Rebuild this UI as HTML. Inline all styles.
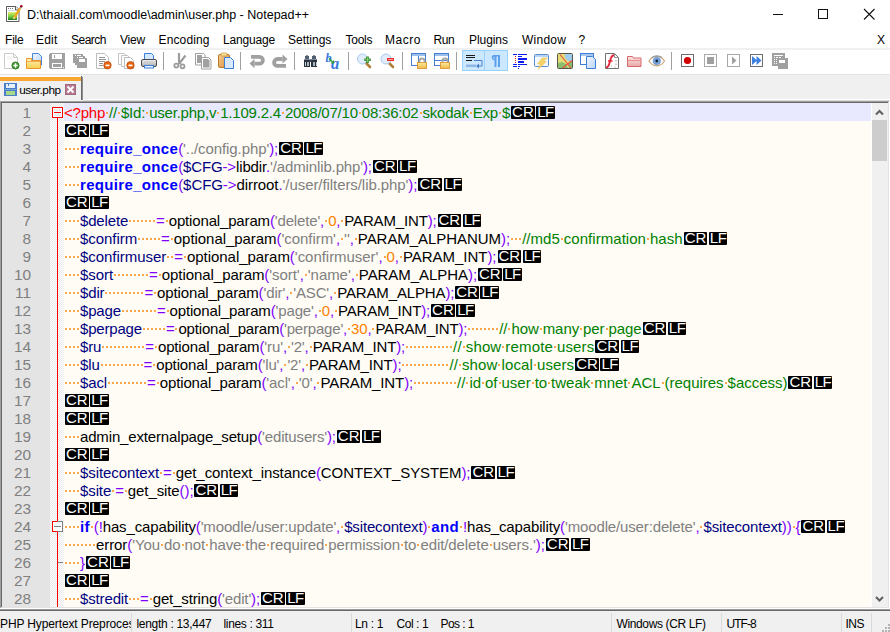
<!DOCTYPE html>
<html><head><meta charset="utf-8"><title>Notepad++</title>
<style>
*{margin:0;padding:0;box-sizing:border-box}
html,body{width:890px;height:632px;overflow:hidden;background:#fff}
body{font-family:"Liberation Sans",sans-serif;position:relative}
#win{position:absolute;left:0;top:0;width:890px;height:632px;background:#fff;overflow:hidden}
.abs{position:absolute}
#title{position:absolute;left:27px;top:7px;font-size:12.5px;color:#000;white-space:pre;line-height:16px}
#menu .mi{position:absolute;top:32px;font-size:12px;line-height:16px;color:#000;white-space:pre}
#editor{position:absolute;left:0;top:0;width:890px;height:632px}
#textbg{position:absolute;left:2px;top:103px;width:869px;height:504px;background:#FEFCF5}
#lnm{position:absolute;left:2px;top:103px;width:48px;height:504px;background:#E4E4E4}
#fold{position:absolute;left:50px;top:103px;width:14px;height:504px;background:repeating-conic-gradient(#FFFFFF 0 25%,#E9E9E9 0 50%) 0 0/2px 2px}
#cur{position:absolute;left:64px;top:103px;width:807px;height:18px;background:#E8E8FF}
.num{position:absolute;left:2px;width:29px;text-align:right;font-size:15.4px;line-height:18px;padding-top:0.6px;color:#808080;white-space:pre}
.ln{position:absolute;left:64px;height:18px;padding-top:1px;font-size:15px;line-height:18px;white-space:pre;color:#000}
.ln .q{color:#FF0000}.ln .c{color:#008000}.ln .k{color:#0000FF;font-weight:bold;letter-spacing:0.33px}.ln .v{color:#000080}
.ln .s{color:#808080}.ln .n{color:#FF8000}.ln .o{color:#8000FF}.ln .d{color:#000}
.sp{font-weight:normal;display:inline-block;width:4px;height:18px;vertical-align:top;overflow:hidden;background:linear-gradient(#FFA64D,#FFA64D) no-repeat 1px 8px/2px 2px}
.eol{font-style:normal;display:inline-block;vertical-align:top;height:18px;margin-left:1px}
.eol u{text-decoration:none;display:inline-block;vertical-align:top;background:#000;color:#fff;font-size:15px;line-height:12px;height:13px;margin-top:2px;padding:0 1px;border-radius:1px;margin-right:1.5px;letter-spacing:0}
#sbar{position:absolute;left:872px;top:103px;width:16px;height:504px;background:#F0F0F0}
#status{position:absolute;left:0;top:611px;width:890px;height:21px;background:#F0F0F0}
#status .st{position:absolute;top:5px;font-size:12px;line-height:16px;white-space:pre;color:#000}
#status .sep{position:absolute;top:2px;width:1px;height:19px;background:#D9D9D9}
#tabtxt{position:absolute;left:19.3px;top:82.5px;font-size:11.8px;line-height:14px;color:#000;letter-spacing:-0.5px;white-space:pre}
#svg{position:absolute;left:0;top:0}
.eol u+u{letter-spacing:-0.5px}

</style></head>
<body>
<div id="win">
<div class="abs" style="left:0;top:48px;width:890px;height:2px;background:#F0F0F0"></div>
<div class="abs" style="left:0;top:74px;width:890px;height:1px;background:#E3E3E3"></div>
<div class="abs" style="left:0;top:75px;width:890px;height:26px;background:#F0F0F0"></div>
<div class="abs" style="left:0;top:75px;width:81px;height:2px;background:#F7F9FC"></div>
<div class="abs" style="left:0;top:77px;width:81px;height:4px;background:#FAA633"></div>
<div class="abs" style="left:81px;top:76px;width:1px;height:24px;background:#6A6A6A"></div>
<div class="abs" style="left:82px;top:77px;width:1px;height:23px;background:#8C8C8C"></div>
<div class="abs" style="left:83px;top:99px;width:807px;height:1px;background:#FFFFFF"></div>
<div class="abs" style="left:83px;top:100px;width:807px;height:1px;background:#DADADA"></div>
<div class="abs" style="left:0;top:100px;width:83px;height:1px;background:#F4F4F4"></div>
<div class="abs" style="left:0;top:101px;width:889px;height:1px;background:#A0A0A0"></div>
<div class="abs" style="left:0;top:101px;width:1px;height:508px;background:#A0A0A0"></div>
<div class="abs" style="left:1px;top:102px;width:887px;height:1px;background:#696969"></div>
<div class="abs" style="left:1px;top:102px;width:1px;height:506px;background:#696969"></div>
<div class="abs" style="left:888px;top:102px;width:1px;height:506px;background:#E3E3E3"></div>
<div class="abs" style="left:889px;top:101px;width:1px;height:508px;background:#FFFFFF"></div>
<div class="abs" style="left:1px;top:607px;width:888px;height:1px;background:#E3E3E3"></div>
<div class="abs" style="left:0;top:608px;width:890px;height:1px;background:#FFFFFF"></div>
<div id="textbg"></div>
<div class="abs" style="left:871px;top:103px;width:1px;height:504px;background:#FFFFFF"></div>
<div id="sbar"></div>
<div class="abs" style="left:872px;top:120px;width:15px;height:41px;background:#CDCDCD"></div>
<div class="abs" style="left:0;top:609px;width:890px;height:1px;background:#9A9A9A"></div>
<div class="abs" style="left:0;top:610px;width:890px;height:1px;background:#696969"></div>
<div id="status">
 <div class="st" style="left:0px;width:131px;overflow:hidden;letter-spacing:-0.12px">PHP Hypertext Preprocessor file</div>
 <div class="sep" style="left:131px"></div>
<div class="st" id="s1" style="left:136.50px;letter-spacing:-0.300px">length : 13,447</div><div class="st" id="s2" style="left:223.50px;letter-spacing:-0.340px">lines : 311</div><div class="st" id="s3" style="left:355.00px;letter-spacing:-0.320px">Ln : 1</div><div class="st" id="s4" style="left:396.50px;letter-spacing:-0.433px">Col : 1</div><div class="st" id="s5" style="left:440.50px;letter-spacing:-0.567px">Pos : 1</div><div class="st" id="s6" style="left:616.50px;letter-spacing:-0.371px">Windows (CR LF)</div><div class="st" id="s7" style="left:726.50px;letter-spacing:-0.950px">UTF-8</div><div class="st" id="s8" style="left:845.50px;letter-spacing:-0.500px">INS</div>
 <div class="sep" style="left:351px"></div>
 <div class="sep" style="left:611px"></div>
 <div class="sep" style="left:721px"></div>
 <div class="sep" style="left:841px"></div>
 <div class="sep" style="left:871px"></div>
</div>
<div id="title">D:\thaiall.com\moodle\admin\user.php - Notepad++</div>
<div id="tabtxt">user.php</div>

<div id="menu"><div class="mi" id="m1" style="left:5.00px;letter-spacing:-0.200px">File</div><div class="mi" id="m2" style="left:36.00px;letter-spacing:0.200px">Edit</div><div class="mi" id="m3" style="left:71.00px;letter-spacing:-0.520px">Search</div><div class="mi" id="m4" style="left:120.00px;letter-spacing:-0.200px">View</div><div class="mi" id="m5" style="left:158.50px;letter-spacing:0.143px">Encoding</div><div class="mi" id="m6" style="left:223.00px;letter-spacing:-0.171px">Language</div><div class="mi" id="m7" style="left:288.00px;letter-spacing:0.000px">Settings</div><div class="mi" id="m8" style="left:345.50px;letter-spacing:-0.250px">Tools</div><div class="mi" id="m9" style="left:385.00px;letter-spacing:0.500px">Macro</div><div class="mi" id="m10" style="left:433.50px;letter-spacing:-0.400px">Run</div><div class="mi" id="m11" style="left:469.00px;letter-spacing:-0.067px">Plugins</div><div class="mi" id="m12" style="left:522.00px;letter-spacing:0.240px">Window</div><div class="mi" id="m13" style="left:578.50px;letter-spacing:0.000px">?</div><div class="mi" id="m14" style="left:877.00px;letter-spacing:0.000px">X</div></div>
<div id="editor">
  <div id="lnm"></div>
  <div id="fold"></div>
  <div id="cur"></div>
  <div class="num" style="top:103px">1</div>
<div class="num" style="top:121px">2</div>
<div class="num" style="top:139px">3</div>
<div class="num" style="top:157px">4</div>
<div class="num" style="top:175px">5</div>
<div class="num" style="top:193px">6</div>
<div class="num" style="top:211px">7</div>
<div class="num" style="top:229px">8</div>
<div class="num" style="top:247px">9</div>
<div class="num" style="top:265px">10</div>
<div class="num" style="top:283px">11</div>
<div class="num" style="top:301px">12</div>
<div class="num" style="top:319px">13</div>
<div class="num" style="top:337px">14</div>
<div class="num" style="top:355px">15</div>
<div class="num" style="top:373px">16</div>
<div class="num" style="top:391px">17</div>
<div class="num" style="top:409px">18</div>
<div class="num" style="top:427px">19</div>
<div class="num" style="top:445px">20</div>
<div class="num" style="top:463px">21</div>
<div class="num" style="top:481px">22</div>
<div class="num" style="top:499px">23</div>
<div class="num" style="top:517px">24</div>
<div class="num" style="top:535px">25</div>
<div class="num" style="top:553px">26</div>
<div class="num" style="top:571px">27</div>
<div class="num" style="top:589px">28</div>
  <div class="ln" style="top:103px;letter-spacing:-0.2143px"><span class="q">&lt;?php</span><b class="sp"> </b><span class="c">//<b class="sp"> </b>$Id:<b class="sp"> </b>user.php,v<b class="sp"> </b>1.109.2.4<b class="sp"> </b>2008/07/10<b class="sp"> </b>08:36:02<b class="sp"> </b>skodak<b class="sp"> </b>Exp<b class="sp"> </b>$</span><i class="eol"><u>CR</u><u>LF</u></i></div>
<div class="ln" style="top:121px"><i class="eol"><u>CR</u><u>LF</u></i></div>
<div class="ln" style="top:139px;letter-spacing:-0.0891px"><b class="sp"> </b><b class="sp"> </b><b class="sp"> </b><b class="sp"> </b><span class="k">require_once</span><span class="o">(</span><span class="s">&#x27;../config.php&#x27;</span><span class="o">)</span><span class="o">;</span><i class="eol"><u>CR</u><u>LF</u></i></div>
<div class="ln" style="top:157px;letter-spacing:-0.1362px"><b class="sp"> </b><b class="sp"> </b><b class="sp"> </b><b class="sp"> </b><span class="k">require_once</span><span class="o">(</span><span class="v">$CFG</span><span class="o">-&gt;</span><span class="d">libdir</span><span class="o">.</span><span class="s">&#x27;/adminlib.php&#x27;</span><span class="o">)</span><span class="o">;</span><i class="eol"><u>CR</u><u>LF</u></i></div>
<div class="ln" style="top:175px;letter-spacing:-0.0727px"><b class="sp"> </b><b class="sp"> </b><b class="sp"> </b><b class="sp"> </b><span class="k">require_once</span><span class="o">(</span><span class="v">$CFG</span><span class="o">-&gt;</span><span class="d">dirroot</span><span class="o">.</span><span class="s">&#x27;/user/filters/lib.php&#x27;</span><span class="o">)</span><span class="o">;</span><i class="eol"><u>CR</u><u>LF</u></i></div>
<div class="ln" style="top:193px"><i class="eol"><u>CR</u><u>LF</u></i></div>
<div class="ln" style="top:211px;letter-spacing:-0.1581px"><b class="sp"> </b><b class="sp"> </b><b class="sp"> </b><b class="sp"> </b><span class="v">$delete</span><b class="sp"> </b><b class="sp"> </b><b class="sp"> </b><b class="sp"> </b><b class="sp"> </b><b class="sp"> </b><b class="sp"> </b><span class="o">=</span><b class="sp"> </b><span class="d">optional_param</span><span class="o">(</span><span class="s">&#x27;delete&#x27;</span><span class="o">,</span><b class="sp"> </b><span class="n">0</span><span class="o">,</span><b class="sp"> </b><span class="d">PARAM_INT</span><span class="o">)</span><span class="o">;</span><i class="eol"><u>CR</u><u>LF</u></i></div>
<div class="ln" style="top:229px;letter-spacing:-0.0511px"><b class="sp"> </b><b class="sp"> </b><b class="sp"> </b><b class="sp"> </b><span class="v">$confirm</span><b class="sp"> </b><b class="sp"> </b><b class="sp"> </b><b class="sp"> </b><b class="sp"> </b><b class="sp"> </b><span class="o">=</span><b class="sp"> </b><span class="d">optional_param</span><span class="o">(</span><span class="s">&#x27;confirm&#x27;</span><span class="o">,</span><b class="sp"> </b><span class="s">&#x27;&#x27;</span><span class="o">,</span><b class="sp"> </b><span class="d">PARAM_ALPHANUM</span><span class="o">)</span><span class="o">;</span><b class="sp"> </b><b class="sp"> </b><b class="sp"> </b><span class="c" style="letter-spacing:0.0364px">//md5<b class="sp"> </b>confirmation<b class="sp"> </b>hash</span><i class="eol"><u>CR</u><u>LF</u></i></div>
<div class="ln" style="top:247px;letter-spacing:-0.0386px"><b class="sp"> </b><b class="sp"> </b><b class="sp"> </b><b class="sp"> </b><span class="v">$confirmuser</span><b class="sp"> </b><b class="sp"> </b><span class="o">=</span><b class="sp"> </b><span class="d">optional_param</span><span class="o">(</span><span class="s">&#x27;confirmuser&#x27;</span><span class="o">,</span><b class="sp"> </b><span class="n">0</span><span class="o">,</span><b class="sp"> </b><span class="d">PARAM_INT</span><span class="o">)</span><span class="o">;</span><i class="eol"><u>CR</u><u>LF</u></i></div>
<div class="ln" style="top:265px;letter-spacing:-0.0582px"><b class="sp"> </b><b class="sp"> </b><b class="sp"> </b><b class="sp"> </b><span class="v">$sort</span><b class="sp"> </b><b class="sp"> </b><b class="sp"> </b><b class="sp"> </b><b class="sp"> </b><b class="sp"> </b><b class="sp"> </b><b class="sp"> </b><b class="sp"> </b><span class="o">=</span><b class="sp"> </b><span class="d">optional_param</span><span class="o">(</span><span class="s">&#x27;sort&#x27;</span><span class="o">,</span><b class="sp"> </b><span class="s">&#x27;name&#x27;</span><span class="o">,</span><b class="sp"> </b><span class="d">PARAM_ALPHA</span><span class="o">)</span><span class="o">;</span><i class="eol"><u>CR</u><u>LF</u></i></div>
<div class="ln" style="top:283px;letter-spacing:-0.1364px"><b class="sp"> </b><b class="sp"> </b><b class="sp"> </b><b class="sp"> </b><span class="v">$dir</span><b class="sp"> </b><b class="sp"> </b><b class="sp"> </b><b class="sp"> </b><b class="sp"> </b><b class="sp"> </b><b class="sp"> </b><b class="sp"> </b><b class="sp"> </b><b class="sp"> </b><span class="o">=</span><b class="sp"> </b><span class="d">optional_param</span><span class="o">(</span><span class="s">&#x27;dir&#x27;</span><span class="o">,</span><b class="sp"> </b><span class="s">&#x27;ASC&#x27;</span><span class="o">,</span><b class="sp"> </b><span class="d">PARAM_ALPHA</span><span class="o">)</span><span class="o">;</span><i class="eol"><u>CR</u><u>LF</u></i></div>
<div class="ln" style="top:301px;letter-spacing:-0.159px"><b class="sp"> </b><b class="sp"> </b><b class="sp"> </b><b class="sp"> </b><span class="v">$page</span><b class="sp"> </b><b class="sp"> </b><b class="sp"> </b><b class="sp"> </b><b class="sp"> </b><b class="sp"> </b><b class="sp"> </b><b class="sp"> </b><b class="sp"> </b><span class="o">=</span><b class="sp"> </b><span class="d">optional_param</span><span class="o">(</span><span class="s">&#x27;page&#x27;</span><span class="o">,</span><b class="sp"> </b><span class="n">0</span><span class="o">,</span><b class="sp"> </b><span class="d">PARAM_INT</span><span class="o">)</span><span class="o">;</span><i class="eol"><u>CR</u><u>LF</u></i></div>
<div class="ln" style="top:319px;letter-spacing:-0.1902px"><b class="sp"> </b><b class="sp"> </b><b class="sp"> </b><b class="sp"> </b><span class="v">$perpage</span><b class="sp"> </b><b class="sp"> </b><b class="sp"> </b><b class="sp"> </b><b class="sp"> </b><b class="sp"> </b><span class="o">=</span><b class="sp"> </b><span class="d">optional_param</span><span class="o">(</span><span class="s">&#x27;perpage&#x27;</span><span class="o">,</span><b class="sp"> </b><span class="n">30</span><span class="o">,</span><b class="sp"> </b><span class="d">PARAM_INT</span><span class="o">)</span><span class="o">;</span><b class="sp"> </b><b class="sp"> </b><b class="sp"> </b><b class="sp"> </b><b class="sp"> </b><b class="sp"> </b><b class="sp"> </b><b class="sp"> </b><span class="c" style="letter-spacing:-0.0749px">//<b class="sp"> </b>how<b class="sp"> </b>many<b class="sp"> </b>per<b class="sp"> </b>page</span><i class="eol"><u>CR</u><u>LF</u></i></div>
<div class="ln" style="top:337px;letter-spacing:-0.1337px"><b class="sp"> </b><b class="sp"> </b><b class="sp"> </b><b class="sp"> </b><span class="v">$ru</span><b class="sp"> </b><b class="sp"> </b><b class="sp"> </b><b class="sp"> </b><b class="sp"> </b><b class="sp"> </b><b class="sp"> </b><b class="sp"> </b><b class="sp"> </b><b class="sp"> </b><b class="sp"> </b><span class="o">=</span><b class="sp"> </b><span class="d">optional_param</span><span class="o">(</span><span class="s">&#x27;ru&#x27;</span><span class="o">,</span><b class="sp"> </b><span class="s">&#x27;2&#x27;</span><span class="o">,</span><b class="sp"> </b><span class="d">PARAM_INT</span><span class="o">)</span><span class="o">;</span><b class="sp"> </b><b class="sp"> </b><b class="sp"> </b><b class="sp"> </b><b class="sp"> </b><b class="sp"> </b><b class="sp"> </b><b class="sp"> </b><b class="sp"> </b><b class="sp"> </b><b class="sp"> </b><b class="sp"> </b><span class="c" style="letter-spacing:0.1495px">//<b class="sp"> </b>show<b class="sp"> </b>remote<b class="sp"> </b>users</span><i class="eol"><u>CR</u><u>LF</u></i></div>
<div class="ln" style="top:355px;letter-spacing:-0.1426px"><b class="sp"> </b><b class="sp"> </b><b class="sp"> </b><b class="sp"> </b><span class="v">$lu</span><b class="sp"> </b><b class="sp"> </b><b class="sp"> </b><b class="sp"> </b><b class="sp"> </b><b class="sp"> </b><b class="sp"> </b><b class="sp"> </b><b class="sp"> </b><b class="sp"> </b><b class="sp"> </b><span class="o">=</span><b class="sp"> </b><span class="d">optional_param</span><span class="o">(</span><span class="s">&#x27;lu&#x27;</span><span class="o">,</span><b class="sp"> </b><span class="s">&#x27;2&#x27;</span><span class="o">,</span><b class="sp"> </b><span class="d">PARAM_INT</span><span class="o">)</span><span class="o">;</span><b class="sp"> </b><b class="sp"> </b><b class="sp"> </b><b class="sp"> </b><b class="sp"> </b><b class="sp"> </b><b class="sp"> </b><b class="sp"> </b><b class="sp"> </b><b class="sp"> </b><b class="sp"> </b><b class="sp"> </b><span class="c" style="letter-spacing:0.1183px">//<b class="sp"> </b>show<b class="sp"> </b>local<b class="sp"> </b>users</span><i class="eol"><u>CR</u><u>LF</u></i></div>
<div class="ln" style="top:373px;letter-spacing:-0.1197px"><b class="sp"> </b><b class="sp"> </b><b class="sp"> </b><b class="sp"> </b><span class="v">$acl</span><b class="sp"> </b><b class="sp"> </b><b class="sp"> </b><b class="sp"> </b><b class="sp"> </b><b class="sp"> </b><b class="sp"> </b><b class="sp"> </b><b class="sp"> </b><b class="sp"> </b><span class="o">=</span><b class="sp"> </b><span class="d">optional_param</span><span class="o">(</span><span class="s">&#x27;acl&#x27;</span><span class="o">,</span><b class="sp"> </b><span class="s">&#x27;0&#x27;</span><span class="o">,</span><b class="sp"> </b><span class="d">PARAM_INT</span><span class="o">)</span><span class="o">;</span><b class="sp"> </b><b class="sp"> </b><b class="sp"> </b><b class="sp"> </b><b class="sp"> </b><b class="sp"> </b><b class="sp"> </b><b class="sp"> </b><b class="sp"> </b><b class="sp"> </b><b class="sp"> </b><span class="c" style="letter-spacing:-0.0205px">//<b class="sp"> </b>id<b class="sp"> </b>of<b class="sp"> </b>user<b class="sp"> </b>to<b class="sp"> </b>tweak<b class="sp"> </b>mnet<b class="sp"> </b>ACL<b class="sp"> </b>(requires<b class="sp"> </b>$access)</span><i class="eol"><u>CR</u><u>LF</u></i></div>
<div class="ln" style="top:391px"><i class="eol"><u>CR</u><u>LF</u></i></div>
<div class="ln" style="top:409px"><i class="eol"><u>CR</u><u>LF</u></i></div>
<div class="ln" style="top:427px;letter-spacing:-0.1561px"><b class="sp"> </b><b class="sp"> </b><b class="sp"> </b><b class="sp"> </b><span class="d">admin_externalpage_setup</span><span class="o">(</span><span class="s">&#x27;editusers&#x27;</span><span class="o">)</span><span class="o">;</span><i class="eol"><u>CR</u><u>LF</u></i></div>
<div class="ln" style="top:445px"><i class="eol"><u>CR</u><u>LF</u></i></div>
<div class="ln" style="top:463px;letter-spacing:-0.0813px"><b class="sp"> </b><b class="sp"> </b><b class="sp"> </b><b class="sp"> </b><span class="v">$sitecontext</span><b class="sp"> </b><span class="o">=</span><b class="sp"> </b><span class="d">get_context_instance</span><span class="o">(</span><span class="d">CONTEXT_SYSTEM</span><span class="o">)</span><span class="o">;</span><i class="eol"><u>CR</u><u>LF</u></i></div>
<div class="ln" style="top:481px;letter-spacing:-0.1032px"><b class="sp"> </b><b class="sp"> </b><b class="sp"> </b><b class="sp"> </b><span class="v">$site</span><b class="sp"> </b><span class="o">=</span><b class="sp"> </b><span class="d">get_site</span><span class="o">(</span><span class="o">)</span><span class="o">;</span><i class="eol"><u>CR</u><u>LF</u></i></div>
<div class="ln" style="top:499px"><i class="eol"><u>CR</u><u>LF</u></i></div>
<div class="ln" style="top:517px;letter-spacing:-0.1428px"><b class="sp"> </b><b class="sp"> </b><b class="sp"> </b><b class="sp"> </b><span class="k">if</span><b class="sp"> </b><span class="o">(</span><span class="o">!</span><span class="d">has_capability</span><span class="o">(</span><span class="s">&#x27;moodle/user:update&#x27;</span><span class="o">,</span><b class="sp"> </b><span class="v">$sitecontext</span><span class="o">)</span><b class="sp"> </b><span class="k">and</span><b class="sp"> </b><span class="o">!</span><span class="d">has_capability</span><span class="o">(</span><span class="s">&#x27;moodle/user:delete&#x27;</span><span class="o">,</span><b class="sp"> </b><span class="v">$sitecontext</span><span class="o">)</span><span class="o">)</span><b class="sp"> </b><span class="o">{</span><i class="eol"><u>CR</u><u>LF</u></i></div>
<div class="ln" style="top:535px;letter-spacing:-0.0842px"><b class="sp"> </b><b class="sp"> </b><b class="sp"> </b><b class="sp"> </b><b class="sp"> </b><b class="sp"> </b><b class="sp"> </b><b class="sp"> </b><span class="d">error</span><span class="o">(</span><span class="s">&#x27;You<b class="sp"> </b>do<b class="sp"> </b>not<b class="sp"> </b>have<b class="sp"> </b>the<b class="sp"> </b>required<b class="sp"> </b>permission<b class="sp"> </b>to<b class="sp"> </b>edit/delete<b class="sp"> </b>users.&#x27;</span><span class="o">)</span><span class="o">;</span><i class="eol"><u>CR</u><u>LF</u></i></div>
<div class="ln" style="top:553px;letter-spacing:0.0783px"><b class="sp"> </b><b class="sp"> </b><b class="sp"> </b><b class="sp"> </b><span class="o">}</span><i class="eol"><u>CR</u><u>LF</u></i></div>
<div class="ln" style="top:571px"><i class="eol"><u>CR</u><u>LF</u></i></div>
<div class="ln" style="top:589px;letter-spacing:-0.1406px"><b class="sp"> </b><b class="sp"> </b><b class="sp"> </b><b class="sp"> </b><span class="v">$stredit</span><b class="sp"> </b><b class="sp"> </b><b class="sp"> </b><span class="o">=</span><b class="sp"> </b><span class="d">get_string</span><span class="o">(</span><span class="s">&#x27;edit&#x27;</span><span class="o">)</span><span class="o">;</span><i class="eol"><u>CR</u><u>LF</u></i></div>
</div>
<svg id="svg" width="890" height="632" viewBox="0 0 890 632">
<defs>
 <linearGradient id="gGreen" x1="0" y1="0" x2="0" y2="1"><stop offset="0" stop-color="#E6F070"/><stop offset=".6" stop-color="#6CC83A"/><stop offset="1" stop-color="#1F7A1F"/></linearGradient>
 <linearGradient id="gFolder" x1="0" y1="0" x2="0" y2="1"><stop offset="0" stop-color="#FFF2B8"/><stop offset="1" stop-color="#F8D050"/></linearGradient>
 <linearGradient id="gBlue" x1="0" y1="0" x2="1" y2="1"><stop offset="0" stop-color="#F0F6FF"/><stop offset="1" stop-color="#BCD6F8"/></linearGradient>
 <linearGradient id="gClip" x1="0" y1="0" x2="1" y2="1"><stop offset="0" stop-color="#F8D098"/><stop offset="1" stop-color="#D88830"/></linearGradient>
 <linearGradient id="gLock" x1="0" y1="0" x2="0" y2="1"><stop offset="0" stop-color="#FDEBA0"/><stop offset="1" stop-color="#F0B848"/></linearGradient>
 <linearGradient id="gPrint" x1="0" y1="0" x2="0" y2="1"><stop offset="0" stop-color="#F4F4F4"/><stop offset="1" stop-color="#A8A8A8"/></linearGradient>
 <linearGradient id="gPink" x1="0" y1="0" x2="0" y2="1"><stop offset="0" stop-color="#FBE6E6"/><stop offset="1" stop-color="#E8A8A8"/></linearGradient>
</defs>
<!-- title icon -->
<g>
 <path d="M6.5 6.5h9.5l3 3v12h-12.5z" fill="#fff" stroke="#5A5A5A"/>
 <path d="M15.5 6.5v3.5h3.5" fill="#F0F0F0" stroke="#5A5A5A"/>
 <rect x="8" y="8" width="1" height="1" fill="#707070"/><rect x="10" y="8" width="1" height="1" fill="#707070"/><rect x="12" y="8" width="1" height="1" fill="#707070"/>
 <rect x="8" y="10" width="7" height="1" fill="#C8DCF0"/>
 <rect x="8" y="12" width="9" height="8" fill="url(#gGreen)"/>
 <path d="M13.8 18.6 L20.2 8.2" stroke="#F0A818" stroke-width="2.2"/>
 <path d="M13.6 18.9 L14.6 17.2" stroke="#F8E8C0" stroke-width="1.2"/>
 <path d="M20.2 8.2 L21 6.9" stroke="#88A8C8" stroke-width="2"/>
 <circle cx="21.3" cy="6.3" r="1.3" fill="#A00010"/>
</g>
<!-- window controls -->
<rect x="773" y="14" width="10" height="1" fill="#111"/>
<rect x="818.5" y="9.5" width="9" height="9" fill="none" stroke="#111"/>
<path d="M864 9 L874.5 19.5 M874.5 9 L864 19.5" stroke="#111" stroke-width="1.1"/>
<!-- toolbar separators -->
<g fill="#A0A0A0">
 <rect x="163" y="52" width="1" height="18"/><rect x="240" y="52" width="1" height="18"/><rect x="294" y="52" width="1" height="18"/>
 <rect x="348" y="52" width="1" height="18"/><rect x="402" y="52" width="1" height="18"/><rect x="456" y="52" width="1" height="18"/>
 <rect x="671" y="52" width="1" height="18"/>
</g>
<!-- new -->
<path d="M4.5 53.5h9l4 4v11h-13z" fill="#fff" stroke="#CACACA"/>
<path d="M13.5 53.5v4h4" fill="none" stroke="#CACACA"/>
<path d="M7 57h5M7 59h6" stroke="#EAEAEA"/>
<circle cx="15.5" cy="65.5" r="3.6" fill="#3C9A2C" stroke="#2A7220" stroke-width=".8"/>
<path d="M15.5 63.3v4.4M13.3 65.5h4.4" stroke="#fff" stroke-width="1.4"/>
<!-- open -->
<path d="M32.5 53.5h6l3 3v8.5h-9z" fill="url(#gBlue)" stroke="#4A86D8"/>
<path d="M26.5 58.5h5v2h9v8h-14z" fill="url(#gFolder)" stroke="#E8942A"/>
<path d="M27 61.5h13" stroke="#F0B050"/>
<!-- save -->
<path d="M49 54h1v-1h15v16h-15v-1h-1z" fill="#A0A0A0"/>
<rect x="52" y="54" width="10" height="5" fill="#fff"/><rect x="54" y="55" width="1" height="3" fill="#A0A0A0"/>
<rect x="52" y="63" width="10" height="5" fill="#fff"/><rect x="53" y="64" width="8" height="3" fill="#A0A0A0"/>
<rect x="63" y="67" width="1" height="1" fill="#fff"/>
<!-- save all -->
<g fill="#A0A0A0">
 <rect x="73" y="54" width="10" height="9"/><rect x="75" y="56" width="10" height="9"/><rect x="77" y="58" width="10" height="10"/>
</g>
<g fill="#fff"><rect x="75" y="55" width="1" height="1"/><rect x="77" y="55" width="4" height="1"/><rect x="77" y="57" width="1" height="1"/><rect x="79" y="57" width="4" height="1"/><rect x="79" y="59" width="6" height="3"/></g>
<!-- close -->
<path d="M96.5 53.5h8l4 4v11h-12z" fill="#fff" stroke="#BDBDBD"/>
<path d="M99 57.5h6M99 59.5h7M99 61.5h6M99 63.5h4M99 65.5h4" stroke="#8A8A8A" stroke-width=".9"/>
<circle cx="107.5" cy="65.3" r="3.7" fill="#E8650F" stroke="#C04A08" stroke-width=".8"/>
<rect x="105.5" y="64.6" width="4" height="1.6" fill="#fff"/>
<!-- close all -->
<path d="M118.5 53.5h6l2 2v9h-8z" fill="#fff" stroke="#C4C4C4"/>
<path d="M121.5 55.5h6l2 2v9h-8z" fill="#fff" stroke="#C4C4C4"/>
<path d="M124.5 57.5h6l3 3v8h-9z" fill="#fff" stroke="#BDBDBD"/>
<circle cx="130.5" cy="65.3" r="3.7" fill="#E8650F" stroke="#C04A08" stroke-width=".8"/>
<rect x="128.5" y="64.6" width="4" height="1.6" fill="#fff"/>
<!-- print -->
<path d="M144.5 53.5h7l2 2v5h-9z" fill="#D6E8FF" stroke="#3C7FD8"/>
<rect x="141.5" y="59.5" width="15" height="7" rx="1.5" fill="url(#gPrint)" stroke="#4A4A4A"/>
<rect x="144" y="61" width="10" height="2" fill="#D0D0D0"/>
<rect x="144.5" y="65.5" width="9" height="2.5" fill="#E8F2FF" stroke="#3C7FD8"/>
<!-- cut -->
<path d="M179 53v8.5l1.5 2.5" stroke="#9C9C9C" stroke-width="2.2" fill="none"/>
<path d="M185.5 55.5l-5 6.5-2.5 2" stroke="#9C9C9C" stroke-width="2.2" fill="none"/>
<circle cx="176.3" cy="65.6" r="2" fill="none" stroke="#9C9C9C" stroke-width="1.8"/>
<circle cx="182.5" cy="66.3" r="2" fill="none" stroke="#9C9C9C" stroke-width="1.8"/>
<!-- copy -->
<path d="M195.5 53.5h8l1.5 1.5v10h-9.5z" fill="#fff" stroke="#A0A0A0"/>
<rect x="197" y="55" width="5" height="8" fill="#A0A0A0"/>
<path d="M201.5 57.5h7l2.5 2.5v9h-9.5z" fill="#fff" stroke="#A0A0A0"/>
<path d="M203 59h5l1.5 1.5v7h-6.5z" fill="#A0A0A0"/>
<!-- paste -->
<rect x="218.5" y="54.5" width="11" height="13" rx="1.5" fill="url(#gClip)" stroke="#B8782A"/>
<rect x="221" y="53" width="6" height="3" rx="1" fill="#F8E090" stroke="#C08830" stroke-width=".6"/>
<path d="M224.5 57.5h6l3 3v8h-9z" fill="#D8E8FF" stroke="#3C7FD8"/>
<!-- undo -->
<path d="M251 56.8h8.5a3.4 3.4 0 0 1 0 6.8h-5" stroke="#A0A0A0" stroke-width="3.8" fill="none"/>
<path d="M249.5 63.6l5-4.6v9.2z" fill="#A0A0A0"/>
<!-- redo -->
<path d="M286 65.8h-8.5a3.4 3.4 0 0 1 0-6.8h5" stroke="#A0A0A0" stroke-width="3.8" fill="none"/>
<path d="M287.5 59l-5-4.6v9.2z" fill="#A0A0A0"/>
<!-- find -->
<rect x="305" y="56" width="4" height="3" fill="#506070"/><rect x="312" y="56" width="4" height="3" fill="#506070"/>
<rect x="306" y="55" width="2" height="1" fill="#8090A0"/><rect x="313" y="55" width="2" height="1" fill="#8090A0"/>
<path d="M304 60l1-1h6v2h-1v6h-6z" fill="#2A323C"/>
<path d="M317 60l-1-1h-6v2h1v6h6z" fill="#2A323C"/>
<rect x="309" y="59" width="3" height="3" fill="#3A4450"/>
<rect x="305" y="59" width="12" height="1" fill="#7A8A9A"/>
<rect x="305" y="62" width="1" height="4" fill="#C0CCD8"/><rect x="307" y="62" width="2" height="4" fill="#A8B4C0"/>
<rect x="313" y="62" width="2" height="4" fill="#A8B4C0"/><rect x="316" y="62" width="1" height="4" fill="#C0CCD8"/>
<!-- replace -->
<text x="325.5" y="61.5" font-family="Liberation Serif" font-style="italic" font-weight="bold" font-size="12.5" fill="#3A7AE0">b</text>
<text x="331" y="69" font-family="Liberation Serif" font-style="italic" font-weight="bold" font-size="16.5" fill="#3A7AE0">a</text>
<path d="M329 58.5l3.5 3.5" stroke="#2E9A3A" stroke-width="1.6"/><path d="M334 63.5h-3.5l3.5-3.5z" fill="#2E9A3A"/>
<!-- zoom in -->
<path d="M366 63l4 4" stroke="#B0803A" stroke-width="2.6" stroke-linecap="round"/>
<circle cx="362.5" cy="59" r="5" fill="#E2EDFB" stroke="#A8C8F0"/>
<path d="M367.5 56.5v6.5M364.3 59.8h6.5" stroke="#2E8A2E" stroke-width="2.6"/>
<path d="M367.5 57.5v4.5M365.3 59.8h4.5" stroke="#8CCB70" stroke-width="1"/>
<!-- zoom out -->
<path d="M389 63l4 4" stroke="#B0803A" stroke-width="2.6" stroke-linecap="round"/>
<circle cx="386" cy="59" r="5" fill="#E2EDFB" stroke="#A8C8F0"/>
<rect x="387" y="58" width="7" height="3" fill="#F02828"/><rect x="388" y="59" width="5" height="1" fill="#FF9A9A"/>
<!-- sync v -->
<rect x="411.5" y="53.5" width="14" height="12" fill="#fff" stroke="#4A7ED0"/>
<rect x="412" y="54" width="13" height="2" fill="#9CC0EE"/>
<path d="M418.5 56v9" stroke="#4A7ED0"/>
<path d="M419.5 62.5v-1.5a2.5 2.5 0 0 1 5 0v1.5" stroke="#A8A8A8" stroke-width="1.8" fill="none"/>
<rect x="417.5" y="62.5" width="9" height="6" fill="url(#gLock)" stroke="#D89020" stroke-width=".8"/>
<!-- sync h -->
<rect x="434.5" y="53.5" width="14" height="12" fill="#fff" stroke="#4A7ED0"/>
<rect x="435" y="54" width="13" height="2" fill="#9CC0EE"/>
<path d="M435 60.5h13" stroke="#4A7ED0"/>
<path d="M442.5 62.5v-1.5a2.5 2.5 0 0 1 5 0v1.5" stroke="#A8A8A8" stroke-width="1.8" fill="none"/>
<rect x="440.5" y="62.5" width="9" height="6" fill="url(#gLock)" stroke="#D89020" stroke-width=".8"/>
<!-- word wrap button -->
<rect x="462.5" y="50.5" width="45" height="20" fill="#CCE8FF" stroke="#99D1FF"/>
<path d="M484.5 50.5v20" stroke="#99D1FF"/>
<path d="M466 55.5h9M466 57.5h9M466 60.5h6" stroke="#1A1A1A" stroke-width="1.1"/>
<path d="M474 60.5h8v5.5h-3" stroke="#4A7ED0" stroke-width="1" fill="none"/>
<path d="M476 66l3-2.5v5z" fill="#4A7ED0"/>
<rect x="466" y="64.5" width="10" height="2.5" fill="#8FB8E8"/>
<!-- pilcrow -->
<path d="M493 55h7v12h-2v-10.5h-1.5v10.5h-2v-6.5a3 3 0 0 1 -1.5 -5.5z" fill="#5C9FEA"/><path d="M494 56.5a2 2 0 0 0 0.5 3.5v-3.5z" fill="#A8CCF4"/>
<!-- indent guide -->
<g fill="#0A1AF0">
 <rect x="513" y="54" width="4" height="1"/><rect x="518" y="54" width="9" height="1"/>
 <rect x="518" y="56" width="4" height="1"/>
 <rect x="518" y="58" width="9" height="2"/>
 <rect x="518" y="61" width="6" height="2"/>
 <rect x="513" y="64" width="4" height="1"/><rect x="518" y="64" width="9" height="1"/>
 <rect x="513" y="66" width="4" height="1"/><rect x="518" y="66" width="2" height="1"/>
 <rect x="518" y="68" width="1" height="1"/>
</g>
<g fill="#E02020"><rect x="515" y="56" width="1" height="1"/><rect x="515" y="58" width="1" height="1"/><rect x="515" y="60" width="1" height="1"/><rect x="515" y="62" width="1" height="1"/></g>
<!-- udl / launch -->
<rect x="534.5" y="54.5" width="14" height="12" rx="1" fill="#F4F8FF" stroke="#5A8AD0"/>
<rect x="535" y="55" width="13" height="2" fill="#B8D4F4"/>
<path d="M547.5 58h-5.5l-4.5 6h3l-2.5 5.5 8.5-8h-3.5z" fill="#F6D468" stroke="#E8C050" stroke-width=".5"/>
<!-- doc map -->
<rect x="557.5" y="53.5" width="15" height="15" rx="1" fill="#E4DC78" stroke="#5A5448"/>
<path d="M565 54h7v7h-4l-3-3z" fill="#A0CCF0"/>
<path d="M558 63l4-1 4 2 2 4h-10z" fill="#88C070"/>
<path d="M568 64l4-3v7h-3z" fill="#88C070"/>
<path d="M560 54.5l11 13.5M572 60.5l-9.5 7.5" stroke="#E85040" stroke-width="1.1"/>
<!-- doc list -->
<rect x="580.5" y="53.5" width="13" height="11" fill="#fff" stroke="#3C7FD8"/>
<rect x="581" y="54" width="12" height="2" fill="#A8C8F0"/>
<path d="M586.5 56.5h6l3 3v9h-9z" fill="url(#gBlue)" stroke="#3C7FD8"/>
<!-- function list -->
<path d="M605.5 53.5h9l4 4v11h-13z" fill="#fff" stroke="#707070"/>
<path d="M614.5 53.5v4h4" fill="none" stroke="#909090"/>
<path d="M606 67.5c1.8 0 2.6-1.2 3.2-3.4l1.6-5.6c.6-2 1.6-3.2 3.2-3.2" stroke="#E02838" stroke-width="1.9" fill="none"/>
<path d="M608 61h4.5" stroke="#E02838" stroke-width="1.5"/>
<path d="M616 60v1.5M616 63.5v1.5M614.5 67h1" stroke="#A0A0A0"/>
<path d="M611 66h1" stroke="#90C090"/>
<!-- folder workspace -->
<path d="M627.5 56.5h5l1 1.5h7.5v8.5h-13.5z" fill="url(#gPink)" stroke="#D86868"/>
<path d="M628 60.5h12" stroke="#E89090"/>
<!-- eye -->
<path d="M649 61c4-6.5 11.5-6.5 15.5 0c-4 6.5-11.5 6.5-15.5 0z" fill="#F8FAFF" stroke="#C8A070" stroke-width="1.1"/>
<path d="M652 57.5c3-2 7-2 10 0" stroke="#8898A8" stroke-width="1" fill="none"/>
<circle cx="656.8" cy="61" r="3.7" fill="#78A4DC" stroke="#5A84C0" stroke-width=".6"/>
<circle cx="656.8" cy="61" r="1.4" fill="#1A2838"/>
<!-- macro record -->
<rect x="681.5" y="54.5" width="12" height="12" fill="#fff" stroke="#6E6E6E"/>
<circle cx="687.5" cy="60.5" r="3.6" fill="#D00000"/>
<!-- stop -->
<rect x="704.5" y="54.5" width="12" height="12" fill="#fff" stroke="#A8A8A8"/>
<rect x="707" y="57" width="7" height="7" fill="#A0A0A0"/>
<!-- play -->
<rect x="727.5" y="54.5" width="12" height="12" fill="#fff" stroke="#A8A8A8"/>
<path d="M732 56.5l4.5 4-4.5 4z" fill="#A0A0A0"/>
<!-- run multiple -->
<rect x="750.5" y="54.5" width="12" height="12" fill="#fff" stroke="#6E6E6E"/>
<path d="M752 56l5 4.5-5 4.5zM756.5 56l5 4.5-5 4.5z" fill="#3C7FE0"/>
<!-- save macro -->
<rect x="772" y="53" width="13" height="13" fill="#A0A0A0"/>
<rect x="778" y="58" width="10" height="11" fill="#A0A0A0"/>
<g fill="#fff"><rect x="774" y="55" width="9" height="1"/><rect x="774" y="57" width="1" height="1"/><rect x="776" y="57" width="2" height="1"/><rect x="779" y="57" width="2" height="1"/><rect x="774" y="59" width="1" height="1"/><rect x="776" y="59" width="1" height="1"/><rect x="774" y="61" width="1" height="1"/><rect x="776" y="61" width="1" height="1"/><rect x="774" y="63" width="1" height="1"/><rect x="776" y="63" width="1" height="1"/><rect x="779" y="60" width="6" height="3"/></g>
<!-- tab saved icon -->
<rect x="4" y="83" width="13" height="13" fill="#4A7EC8"/>
<rect x="6" y="84" width="9" height="4" fill="#E8F0FA"/><rect x="8" y="84" width="1" height="2" fill="#4A7EC8"/>
<rect x="5" y="89" width="11" height="1" fill="#7AA4DC"/>
<rect x="6" y="91" width="9" height="4" fill="#A8D888"/>
<!-- tab close -->
<rect x="65" y="84" width="11" height="11" fill="#B47A90"/><rect x="65.5" y="84.5" width="10" height="10" fill="none" stroke="#A06880"/>
<path d="M67.5 86.5l6 6M73.5 86.5l-6 6" stroke="#fff" stroke-width="2"/>
<!-- fold markers -->
<rect x="52.5" y="107.5" width="10" height="10" fill="#F4FFFF" stroke="#FF0000"/>
<rect x="54" y="109" width="7" height="2" fill="#EDEDED"/><rect x="54" y="114" width="7" height="2" fill="#EDEDED"/>
<rect x="54" y="112" width="7" height="1" fill="#FF0000"/>
<rect x="57" y="118" width="1" height="403" fill="#FF0000"/><rect x="57" y="532" width="1" height="75" fill="#FF0000"/>
<rect x="52.5" y="521.5" width="10" height="10" fill="#FFFFFF" stroke="#808080"/>
<rect x="54" y="526" width="7" height="1" fill="#808080"/>
<path d="M52 521.5h5.5M52.5 521v11M52 531.5h5.5" stroke="#FF0000"/>
<rect x="58" y="562" width="5" height="1" fill="#808080"/>
<!-- scrollbar arrows -->
<path d="M876 114.5l3.5-3.5 3.5 3.5" stroke="#606060" stroke-width="2" fill="none"/>
<path d="M876 597l3.5 3.5 3.5-3.5" stroke="#606060" stroke-width="2" fill="none"/>
<!-- grip -->
<g fill="#B4B4B4"><rect x="888" y="624" width="2" height="2"/><rect x="885" y="627" width="2" height="2"/><rect x="888" y="627" width="2" height="2"/><rect x="882" y="630" width="2" height="2"/><rect x="885" y="630" width="2" height="2"/><rect x="888" y="630" width="2" height="2"/></g>
</svg>

</div>
</body></html>
